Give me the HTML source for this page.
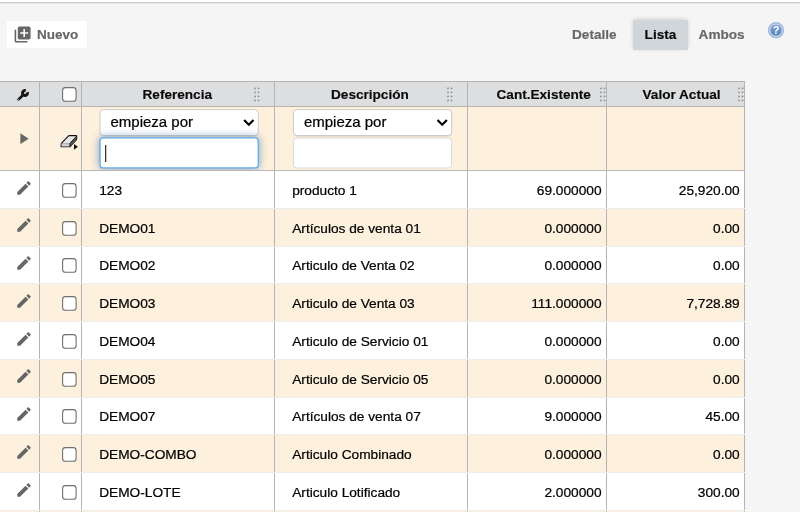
<!DOCTYPE html>
<html lang="es"><head><meta charset="utf-8"><title>Lista</title>
<style>
html,body{margin:0;padding:0}
#app{position:absolute;left:0;top:0;width:800px;height:512px;overflow:hidden;will-change:transform}
body{width:800px;height:512px;overflow:hidden;background:#f5f5f5;position:relative;font-family:"Liberation Sans",Arial,Helvetica,sans-serif;color:#111}
.abs,.ic,.t,.row,.vs,.cb{position:absolute}
.topline{left:0;top:0;width:800px;height:2px;background:#fff;border-bottom:1px solid #cfcfcf;box-shadow:0 1px 0 #e6e6e6}
.btn{left:7px;top:20.6px;width:80px;height:27.2px;background:#fff}
.t{white-space:nowrap;line-height:16px;font-size:13.7px;color:#000}
.t{-webkit-text-stroke-width:0.22px}
.t.b{font-size:13.6px;color:#0a0a0a;-webkit-text-stroke-width:0.15px}
.b{font-weight:bold}
.t.g{color:#666}
.tab{left:633px;top:20px;width:55px;height:29.5px;background:#d0d5d9;box-shadow:0 -1px 5px -1px rgba(0,0,0,.22)}
.hdr{left:0;top:81px;width:745px;height:24px;background:#dcdee0;border-top:1px solid #b4b4b4;border-bottom:1px solid #b4b4b4}
.row{left:0;width:745px}
.vs{width:1px;background:#b4b4b4}
.cb{width:15px;height:15px}
.sel{height:25px;width:157px;border:1px solid #d4d4d4;border-radius:4px;background:linear-gradient(#fff 60%,#eef1f6);box-shadow:0 1px 1px rgba(0,0,0,.08)}
.inp{height:29px;width:157px;border:1px solid #d4d4d4;border-radius:3px;background:#fff}

.sel{border-radius:3.5px}
.inp.f{border:1.5px solid #62aaea;box-shadow:0 0 8px rgba(95,130,170,.5);clip-path:inset(-12px -14px -1.5px -14px)}
.num{text-align:right}
.dots{width:6px;height:15px}
</style></head><body><div id="app">
<div class="abs topline"></div>

<div class="abs btn"></div>
<svg class="ic" viewBox="0 0 24 24" style="left:13.3px;top:24.7px;width:19.2px;height:19.2px"><path fill="#666" d="M19,11H15V15H13V11H9V9H13V5H15V9H19M20,2H8A2,2 0 0,0 6,4V16A2,2 0 0,0 8,18H20A2,2 0 0,0 22,16V4A2,2 0 0,0 20,2M4,6H2V20A2,2 0 0,0 4,22H18V20H4V6Z"/></svg>
<div class="t b g" style="left:37px;top:27px;font-size:13.5px">Nuevo</div>
<div class="abs tab"></div>
<div class="t b g" style="left:572px;top:26.8px">Detalle</div>
<div class="t b" style="left:644.6px;top:26.8px">Lista</div>
<div class="t b g" style="left:698.6px;top:26.8px">Ambos</div>
<svg class="ic" viewBox="0 0 20 20" style="left:766px;top:19.6px;width:20px;height:20px">
<defs><linearGradient id="hg" x1="0" y1="0" x2="0" y2="1"><stop offset="0" stop-color="#7fa0d1"/><stop offset="1" stop-color="#5882be"/></linearGradient></defs>
<circle cx="10" cy="10.2" r="8.2" fill="#a2bae0"/><circle cx="10" cy="10.2" r="6.1" fill="url(#hg)" stroke="#dce6f4" stroke-width=".9"/>
<text x="10" y="13.85" text-anchor="middle" font-family="Liberation Sans,Arial,sans-serif" font-weight="bold" font-size="11" fill="#fff">?</text></svg>
<div class="abs hdr"></div>
<svg class="ic" viewBox="0 0 12 12" style="left:17px;top:88.8px;width:12px;height:12px"><path d="M10.39,3.27A2.5,2.5 0 1 1 8.73,1.61" fill="none" stroke="#151515" stroke-width="2.9"/><path d="M6.3,5.7L1.6,10.4" fill="none" stroke="#151515" stroke-width="2.7" stroke-linecap="round"/><circle cx="1.6" cy="10.4" r="0.6" fill="#a5a5a5"/></svg>
<svg class="cb" viewBox="0 0 15 15" style="left:62px;top:87px"><rect x="0.6" y="0.6" width="13.5" height="13.6" rx="2.8" fill="#fff" stroke="#707070" stroke-width="1.1"/></svg>
<div class="t b" style="left:142.5px;top:86.5px">Referencia</div>
<div class="t b" style="left:331px;top:86.5px">Descripción</div>
<div class="t b" style="left:496.5px;top:86.5px">Cant.Existente</div>
<div class="t b" style="left:642.5px;top:86.5px">Valor Actual</div>
<svg class="ic dots" viewBox="0 0 6 15" style="left:254px;top:87px"><rect x="0.2" y="0.6" width="1.9" height="1.8" fill="#96989b"/><rect x="1.5999999999999999" y="1.9" width="1.3" height="1.3" fill="#f6f6f6"/><rect x="3.7" y="0.6" width="1.9" height="1.8" fill="#96989b"/><rect x="5.1" y="1.9" width="1.3" height="1.3" fill="#f6f6f6"/><rect x="0.2" y="4.65" width="1.9" height="1.8" fill="#96989b"/><rect x="1.5999999999999999" y="5.95" width="1.3" height="1.3" fill="#f6f6f6"/><rect x="3.7" y="4.65" width="1.9" height="1.8" fill="#96989b"/><rect x="5.1" y="5.95" width="1.3" height="1.3" fill="#f6f6f6"/><rect x="0.2" y="8.7" width="1.9" height="1.8" fill="#96989b"/><rect x="1.5999999999999999" y="10.0" width="1.3" height="1.3" fill="#f6f6f6"/><rect x="3.7" y="8.7" width="1.9" height="1.8" fill="#96989b"/><rect x="5.1" y="10.0" width="1.3" height="1.3" fill="#f6f6f6"/><rect x="0.2" y="12.75" width="1.9" height="1.8" fill="#96989b"/><rect x="1.5999999999999999" y="14.05" width="1.3" height="1.3" fill="#f6f6f6"/><rect x="3.7" y="12.75" width="1.9" height="1.8" fill="#96989b"/><rect x="5.1" y="14.05" width="1.3" height="1.3" fill="#f6f6f6"/></svg>
<svg class="ic dots" viewBox="0 0 6 15" style="left:447px;top:87px"><rect x="0.2" y="0.6" width="1.9" height="1.8" fill="#96989b"/><rect x="1.5999999999999999" y="1.9" width="1.3" height="1.3" fill="#f6f6f6"/><rect x="3.7" y="0.6" width="1.9" height="1.8" fill="#96989b"/><rect x="5.1" y="1.9" width="1.3" height="1.3" fill="#f6f6f6"/><rect x="0.2" y="4.65" width="1.9" height="1.8" fill="#96989b"/><rect x="1.5999999999999999" y="5.95" width="1.3" height="1.3" fill="#f6f6f6"/><rect x="3.7" y="4.65" width="1.9" height="1.8" fill="#96989b"/><rect x="5.1" y="5.95" width="1.3" height="1.3" fill="#f6f6f6"/><rect x="0.2" y="8.7" width="1.9" height="1.8" fill="#96989b"/><rect x="1.5999999999999999" y="10.0" width="1.3" height="1.3" fill="#f6f6f6"/><rect x="3.7" y="8.7" width="1.9" height="1.8" fill="#96989b"/><rect x="5.1" y="10.0" width="1.3" height="1.3" fill="#f6f6f6"/><rect x="0.2" y="12.75" width="1.9" height="1.8" fill="#96989b"/><rect x="1.5999999999999999" y="14.05" width="1.3" height="1.3" fill="#f6f6f6"/><rect x="3.7" y="12.75" width="1.9" height="1.8" fill="#96989b"/><rect x="5.1" y="14.05" width="1.3" height="1.3" fill="#f6f6f6"/></svg>
<svg class="ic dots" viewBox="0 0 6 15" style="left:600px;top:87px"><rect x="0.2" y="0.6" width="1.9" height="1.8" fill="#96989b"/><rect x="1.5999999999999999" y="1.9" width="1.3" height="1.3" fill="#f6f6f6"/><rect x="3.7" y="0.6" width="1.9" height="1.8" fill="#96989b"/><rect x="5.1" y="1.9" width="1.3" height="1.3" fill="#f6f6f6"/><rect x="0.2" y="4.65" width="1.9" height="1.8" fill="#96989b"/><rect x="1.5999999999999999" y="5.95" width="1.3" height="1.3" fill="#f6f6f6"/><rect x="3.7" y="4.65" width="1.9" height="1.8" fill="#96989b"/><rect x="5.1" y="5.95" width="1.3" height="1.3" fill="#f6f6f6"/><rect x="0.2" y="8.7" width="1.9" height="1.8" fill="#96989b"/><rect x="1.5999999999999999" y="10.0" width="1.3" height="1.3" fill="#f6f6f6"/><rect x="3.7" y="8.7" width="1.9" height="1.8" fill="#96989b"/><rect x="5.1" y="10.0" width="1.3" height="1.3" fill="#f6f6f6"/><rect x="0.2" y="12.75" width="1.9" height="1.8" fill="#96989b"/><rect x="1.5999999999999999" y="14.05" width="1.3" height="1.3" fill="#f6f6f6"/><rect x="3.7" y="12.75" width="1.9" height="1.8" fill="#96989b"/><rect x="5.1" y="14.05" width="1.3" height="1.3" fill="#f6f6f6"/></svg>
<svg class="ic dots" viewBox="0 0 6 15" style="left:738px;top:87px"><rect x="0.2" y="0.6" width="1.9" height="1.8" fill="#96989b"/><rect x="1.5999999999999999" y="1.9" width="1.3" height="1.3" fill="#f6f6f6"/><rect x="3.7" y="0.6" width="1.9" height="1.8" fill="#96989b"/><rect x="5.1" y="1.9" width="1.3" height="1.3" fill="#f6f6f6"/><rect x="0.2" y="4.65" width="1.9" height="1.8" fill="#96989b"/><rect x="1.5999999999999999" y="5.95" width="1.3" height="1.3" fill="#f6f6f6"/><rect x="3.7" y="4.65" width="1.9" height="1.8" fill="#96989b"/><rect x="5.1" y="5.95" width="1.3" height="1.3" fill="#f6f6f6"/><rect x="0.2" y="8.7" width="1.9" height="1.8" fill="#96989b"/><rect x="1.5999999999999999" y="10.0" width="1.3" height="1.3" fill="#f6f6f6"/><rect x="3.7" y="8.7" width="1.9" height="1.8" fill="#96989b"/><rect x="5.1" y="10.0" width="1.3" height="1.3" fill="#f6f6f6"/><rect x="0.2" y="12.75" width="1.9" height="1.8" fill="#96989b"/><rect x="1.5999999999999999" y="14.05" width="1.3" height="1.3" fill="#f6f6f6"/><rect x="3.7" y="12.75" width="1.9" height="1.8" fill="#96989b"/><rect x="5.1" y="14.05" width="1.3" height="1.3" fill="#f6f6f6"/></svg>
<div class="row" style="top:107px;height:63px;background:#fdf0dc;border-bottom:1px solid #b8b8b8"></div>
<svg class="ic" viewBox="0 0 10 12" style="left:19.5px;top:132.6px;width:9.3px;height:11.4px"><path fill="#666" d="M0.4,0.2L9.4,6L0.4,11.8Z"/></svg>
<svg class="ic" viewBox="56 130 26 24" style="left:56px;top:130px;width:26px;height:24px">
<g transform="translate(0,0.35)"><path d="M69.4,135.2H76Q76.8,135.2 76.7,136L76.5,139.3L70.2,146Q69.8,146.4 69.3,146.4H61.8Q61,146.4 61.1,145.6L61.3,143.6Q61.4,143 61.8,142.5L68.5,135.6Q68.9,135.2 69.4,135.2Z" fill="#e6e6e6" stroke="#111" stroke-width="1.15" stroke-linejoin="round"/>
<path d="M61.6,143.4H69.7V146H61.6Z" fill="#cfcfcf"/>
<path d="M70,143.2L76.4,136.4V139.2L70,146Z" fill="#555"/>
<path d="M61.6,143.1H69.8" fill="none" stroke="#999" stroke-width="0.7"/><path d="M69.8,143.1L76.4,136" fill="none" stroke="#111" stroke-width="1"/>
<path d="M69.9,143.2V146.2" fill="none" stroke="#111" stroke-width="1"/></g>
<path d="M74,144L77.9,146.85L74,149.7Z" fill="#111"/></svg>
<svg class="ic" viewBox="0 107 745 63" style="left:0;top:107px;width:745px;height:63px;overflow:hidden"><defs><filter id="gl" x="-20%" y="-80%" width="140%" height="260%"><feGaussianBlur stdDeviation="4.2"/></filter></defs><rect x="100.3" y="110.6" width="157.7" height="25.9" rx="3.5" fill="#000" opacity=".13"/><rect x="100.0" y="109.6" width="158.3" height="25.9" rx="3.4" fill="#fff" stroke="#cbcbcb" stroke-width="1"/><rect x="293.7" y="110.6" width="157.7" height="25.9" rx="3.5" fill="#000" opacity=".13"/><rect x="293.4" y="109.6" width="158.3" height="25.9" rx="3.4" fill="#fff" stroke="#cbcbcb" stroke-width="1"/><rect x="99.3" y="137.2" width="159.7" height="31.5" rx="4" fill="#5f86b4" opacity=".8" filter="url(#gl)"/><rect x="100.05" y="137.95" width="158.2" height="30" rx="3" fill="#fff" stroke="#62aaea" stroke-width="1.3"/><rect x="293.4" y="138" width="158.2" height="30" rx="3.2" fill="#fff" stroke="#d8d8d8" stroke-width="1"/><path d="M244.1,120L248.8,124.7L253.5,120" fill="none" stroke="#000" stroke-width="2.1"/><path d="M437.5,120L442.2,124.7L446.9,120" fill="none" stroke="#000" stroke-width="2.1"/><rect x="105.2" y="145" width="1" height="17" fill="#000"/></svg>
<div class="t" style="left:110.5px;top:113px;font-size:15px;line-height:18px;color:#000">empieza por</div>
<div class="t" style="left:303.9px;top:113px;font-size:15px;line-height:18px;color:#000">empieza por</div>
<div class="row" style="top:171.00px;height:37.75px;background:#fff"></div>
<svg class="ic" viewBox="0 0 24 24" style="left:14.9px;top:178.60px;width:18px;height:18px"><path fill="#666" d="M20.71,7.04C21.1,6.65 21.1,6 20.71,5.63L18.37,3.29C18,2.9 17.35,2.9 16.96,3.29L15.12,5.12L18.87,8.87M3,17.25V21H6.75L17.81,9.93L14.06,6.18L3,17.25Z"/></svg>
<svg class="cb" viewBox="0 0 15 15" style="left:62px;top:182.90px"><rect x="0.6" y="0.6" width="13.5" height="13.6" rx="2.8" fill="#fff" stroke="#707070" stroke-width="1.1"/></svg>
<div class="t" style="left:99.2px;top:182.90px">123</div>
<div class="t" style="left:292.2px;top:182.90px">producto 1</div>
<div class="t num" style="left:468px;width:133.5px;top:182.90px">69.000000</div>
<div class="t num" style="left:607px;width:132.7px;top:182.90px">25,920.00</div>
<div class="row" style="top:208.75px;height:37.75px;background:#fdf0dc"></div>
<svg class="ic" viewBox="0 0 24 24" style="left:14.9px;top:216.35px;width:18px;height:18px"><path fill="#666" d="M20.71,7.04C21.1,6.65 21.1,6 20.71,5.63L18.37,3.29C18,2.9 17.35,2.9 16.96,3.29L15.12,5.12L18.87,8.87M3,17.25V21H6.75L17.81,9.93L14.06,6.18L3,17.25Z"/></svg>
<svg class="cb" viewBox="0 0 15 15" style="left:62px;top:220.65px"><rect x="0.6" y="0.6" width="13.5" height="13.6" rx="2.8" fill="#fff" stroke="#707070" stroke-width="1.1"/></svg>
<div class="t" style="left:99.2px;top:220.65px">DEMO01</div>
<div class="t" style="left:292.2px;top:220.65px">Artículos de venta 01</div>
<div class="t num" style="left:468px;width:133.5px;top:220.65px">0.000000</div>
<div class="t num" style="left:607px;width:132.7px;top:220.65px">0.00</div>
<div class="row" style="top:246.50px;height:37.75px;background:#fff"></div>
<svg class="ic" viewBox="0 0 24 24" style="left:14.9px;top:254.10px;width:18px;height:18px"><path fill="#666" d="M20.71,7.04C21.1,6.65 21.1,6 20.71,5.63L18.37,3.29C18,2.9 17.35,2.9 16.96,3.29L15.12,5.12L18.87,8.87M3,17.25V21H6.75L17.81,9.93L14.06,6.18L3,17.25Z"/></svg>
<svg class="cb" viewBox="0 0 15 15" style="left:62px;top:258.40px"><rect x="0.6" y="0.6" width="13.5" height="13.6" rx="2.8" fill="#fff" stroke="#707070" stroke-width="1.1"/></svg>
<div class="t" style="left:99.2px;top:258.40px">DEMO02</div>
<div class="t" style="left:292.2px;top:258.40px">Articulo de Venta 02</div>
<div class="t num" style="left:468px;width:133.5px;top:258.40px">0.000000</div>
<div class="t num" style="left:607px;width:132.7px;top:258.40px">0.00</div>
<div class="row" style="top:284.25px;height:37.75px;background:#fdf0dc"></div>
<svg class="ic" viewBox="0 0 24 24" style="left:14.9px;top:291.85px;width:18px;height:18px"><path fill="#666" d="M20.71,7.04C21.1,6.65 21.1,6 20.71,5.63L18.37,3.29C18,2.9 17.35,2.9 16.96,3.29L15.12,5.12L18.87,8.87M3,17.25V21H6.75L17.81,9.93L14.06,6.18L3,17.25Z"/></svg>
<svg class="cb" viewBox="0 0 15 15" style="left:62px;top:296.15px"><rect x="0.6" y="0.6" width="13.5" height="13.6" rx="2.8" fill="#fff" stroke="#707070" stroke-width="1.1"/></svg>
<div class="t" style="left:99.2px;top:296.15px">DEMO03</div>
<div class="t" style="left:292.2px;top:296.15px">Articulo de Venta 03</div>
<div class="t num" style="left:468px;width:133.5px;top:296.15px">111.000000</div>
<div class="t num" style="left:607px;width:132.7px;top:296.15px">7,728.89</div>
<div class="row" style="top:322.00px;height:37.75px;background:#fff"></div>
<svg class="ic" viewBox="0 0 24 24" style="left:14.9px;top:329.60px;width:18px;height:18px"><path fill="#666" d="M20.71,7.04C21.1,6.65 21.1,6 20.71,5.63L18.37,3.29C18,2.9 17.35,2.9 16.96,3.29L15.12,5.12L18.87,8.87M3,17.25V21H6.75L17.81,9.93L14.06,6.18L3,17.25Z"/></svg>
<svg class="cb" viewBox="0 0 15 15" style="left:62px;top:333.90px"><rect x="0.6" y="0.6" width="13.5" height="13.6" rx="2.8" fill="#fff" stroke="#707070" stroke-width="1.1"/></svg>
<div class="t" style="left:99.2px;top:333.90px">DEMO04</div>
<div class="t" style="left:292.2px;top:333.90px">Articulo de Servicio 01</div>
<div class="t num" style="left:468px;width:133.5px;top:333.90px">0.000000</div>
<div class="t num" style="left:607px;width:132.7px;top:333.90px">0.00</div>
<div class="row" style="top:359.75px;height:37.75px;background:#fdf0dc"></div>
<svg class="ic" viewBox="0 0 24 24" style="left:14.9px;top:367.35px;width:18px;height:18px"><path fill="#666" d="M20.71,7.04C21.1,6.65 21.1,6 20.71,5.63L18.37,3.29C18,2.9 17.35,2.9 16.96,3.29L15.12,5.12L18.87,8.87M3,17.25V21H6.75L17.81,9.93L14.06,6.18L3,17.25Z"/></svg>
<svg class="cb" viewBox="0 0 15 15" style="left:62px;top:371.65px"><rect x="0.6" y="0.6" width="13.5" height="13.6" rx="2.8" fill="#fff" stroke="#707070" stroke-width="1.1"/></svg>
<div class="t" style="left:99.2px;top:371.65px">DEMO05</div>
<div class="t" style="left:292.2px;top:371.65px">Articulo de Servicio 05</div>
<div class="t num" style="left:468px;width:133.5px;top:371.65px">0.000000</div>
<div class="t num" style="left:607px;width:132.7px;top:371.65px">0.00</div>
<div class="row" style="top:397.50px;height:37.75px;background:#fff"></div>
<svg class="ic" viewBox="0 0 24 24" style="left:14.9px;top:405.10px;width:18px;height:18px"><path fill="#666" d="M20.71,7.04C21.1,6.65 21.1,6 20.71,5.63L18.37,3.29C18,2.9 17.35,2.9 16.96,3.29L15.12,5.12L18.87,8.87M3,17.25V21H6.75L17.81,9.93L14.06,6.18L3,17.25Z"/></svg>
<svg class="cb" viewBox="0 0 15 15" style="left:62px;top:409.40px"><rect x="0.6" y="0.6" width="13.5" height="13.6" rx="2.8" fill="#fff" stroke="#707070" stroke-width="1.1"/></svg>
<div class="t" style="left:99.2px;top:409.40px">DEMO07</div>
<div class="t" style="left:292.2px;top:409.40px">Artículos de venta 07</div>
<div class="t num" style="left:468px;width:133.5px;top:409.40px">9.000000</div>
<div class="t num" style="left:607px;width:132.7px;top:409.40px">45.00</div>
<div class="row" style="top:435.25px;height:37.75px;background:#fdf0dc"></div>
<svg class="ic" viewBox="0 0 24 24" style="left:14.9px;top:442.85px;width:18px;height:18px"><path fill="#666" d="M20.71,7.04C21.1,6.65 21.1,6 20.71,5.63L18.37,3.29C18,2.9 17.35,2.9 16.96,3.29L15.12,5.12L18.87,8.87M3,17.25V21H6.75L17.81,9.93L14.06,6.18L3,17.25Z"/></svg>
<svg class="cb" viewBox="0 0 15 15" style="left:62px;top:447.15px"><rect x="0.6" y="0.6" width="13.5" height="13.6" rx="2.8" fill="#fff" stroke="#707070" stroke-width="1.1"/></svg>
<div class="t" style="left:99.2px;top:447.15px">DEMO-COMBO</div>
<div class="t" style="left:292.2px;top:447.15px">Articulo Combinado</div>
<div class="t num" style="left:468px;width:133.5px;top:447.15px">0.000000</div>
<div class="t num" style="left:607px;width:132.7px;top:447.15px">0.00</div>
<div class="row" style="top:473.00px;height:37.75px;background:#fff"></div>
<svg class="ic" viewBox="0 0 24 24" style="left:14.9px;top:480.60px;width:18px;height:18px"><path fill="#666" d="M20.71,7.04C21.1,6.65 21.1,6 20.71,5.63L18.37,3.29C18,2.9 17.35,2.9 16.96,3.29L15.12,5.12L18.87,8.87M3,17.25V21H6.75L17.81,9.93L14.06,6.18L3,17.25Z"/></svg>
<svg class="cb" viewBox="0 0 15 15" style="left:62px;top:484.90px"><rect x="0.6" y="0.6" width="13.5" height="13.6" rx="2.8" fill="#fff" stroke="#707070" stroke-width="1.1"/></svg>
<div class="t" style="left:99.2px;top:484.90px">DEMO-LOTE</div>
<div class="t" style="left:292.2px;top:484.90px">Articulo Lotificado</div>
<div class="t num" style="left:468px;width:133.5px;top:484.90px">2.000000</div>
<div class="t num" style="left:607px;width:132.7px;top:484.90px">300.00</div>
<div class="row" style="top:510.75px;height:37.75px;background:#fdf0dc"></div>
<svg class="ic" viewBox="0 0 24 24" style="left:14.9px;top:518.35px;width:18px;height:18px"><path fill="#666" d="M20.71,7.04C21.1,6.65 21.1,6 20.71,5.63L18.37,3.29C18,2.9 17.35,2.9 16.96,3.29L15.12,5.12L18.87,8.87M3,17.25V21H6.75L17.81,9.93L14.06,6.18L3,17.25Z"/></svg>
<svg class="cb" viewBox="0 0 15 15" style="left:62px;top:522.65px"><rect x="0.6" y="0.6" width="13.5" height="13.6" rx="2.8" fill="#fff" stroke="#707070" stroke-width="1.1"/></svg>
<div class="t" style="left:99.2px;top:522.65px">DEMO-SERIE</div>
<div class="t" style="left:292.2px;top:522.65px">Articulo Serializado</div>
<div class="t num" style="left:468px;width:133.5px;top:522.65px">0.000000</div>
<div class="t num" style="left:607px;width:132.7px;top:522.65px">0.00</div>
<div class="vs" style="left:39px;top:82px;height:430px"></div>
<div class="vs" style="left:81px;top:82px;height:430px"></div>
<div class="vs" style="left:274px;top:82px;height:430px"></div>
<div class="vs" style="left:467px;top:82px;height:430px"></div>
<div class="vs" style="left:606px;top:82px;height:430px"></div>
<div class="vs" style="left:744px;top:82px;height:430px"></div>
<div class="abs" style="left:0;top:208px;width:745px;height:1px;background:#ebecef"></div>
<div class="abs" style="left:0;top:246px;width:745px;height:1px;background:#ebecef"></div>
<div class="abs" style="left:0;top:283px;width:745px;height:1px;background:#ebecef"></div>
<div class="abs" style="left:0;top:321px;width:745px;height:1px;background:#ebecef"></div>
<div class="abs" style="left:0;top:359px;width:745px;height:1px;background:#ebecef"></div>
<div class="abs" style="left:0;top:397px;width:745px;height:1px;background:#ebecef"></div>
<div class="abs" style="left:0;top:434px;width:745px;height:1px;background:#ebecef"></div>
<div class="abs" style="left:0;top:472px;width:745px;height:1px;background:#ebecef"></div>
<div class="abs" style="left:0;top:510px;width:745px;height:1px;background:#ebecef"></div>
<div class="abs" style="left:0;top:548px;width:745px;height:1px;background:#ebecef"></div>
</div></body></html>
